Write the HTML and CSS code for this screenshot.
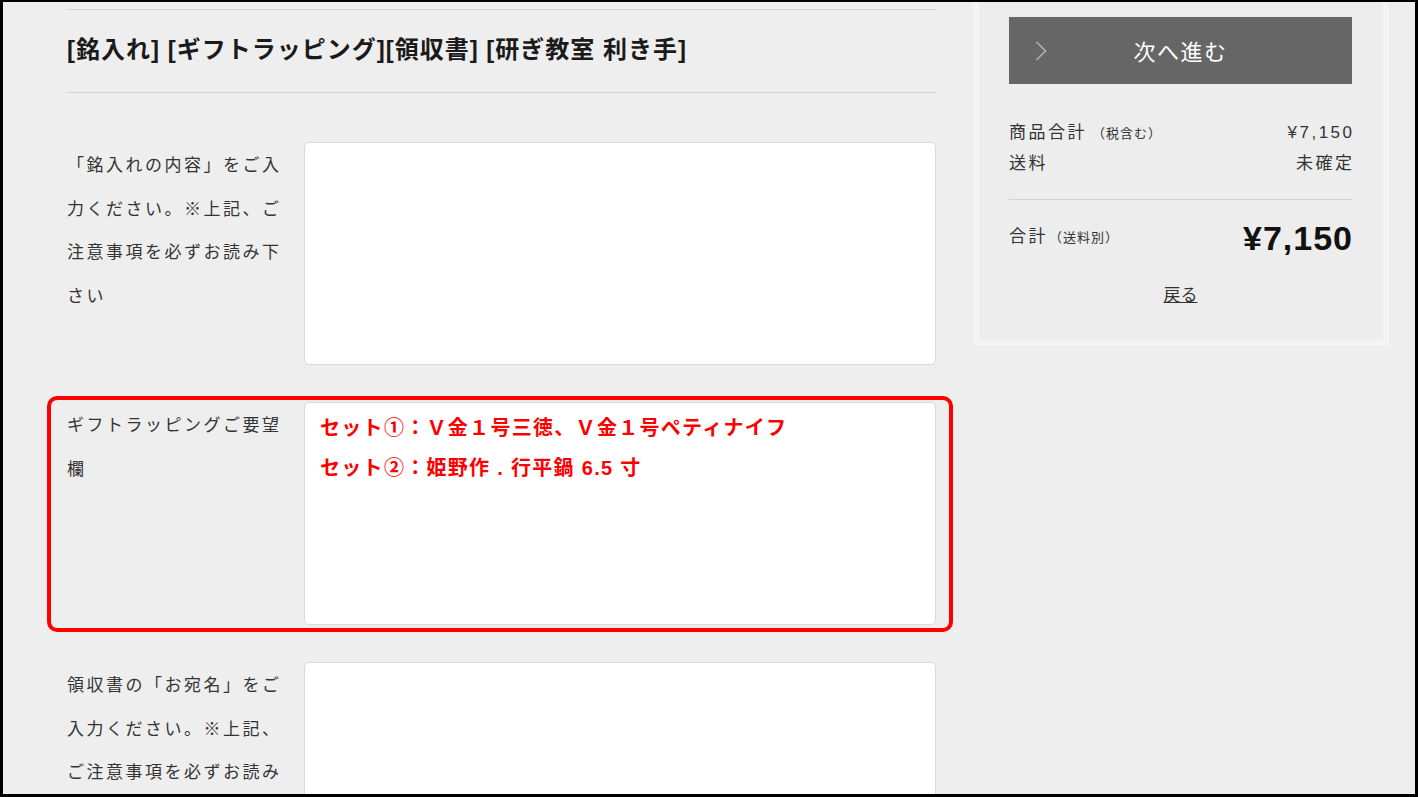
FILE: index.html
```html
<!DOCTYPE html>
<html lang="ja">
<head>
  <meta charset="utf-8">
  <link rel="stylesheet" href="styles.css">
</head>
<body>
  <div class="screen">
    <div class="page">
      <main class="form-col">
        <h2 class="section-title">[銘入れ] [ギフトラッピング][領収書] [研ぎ教室 利き手]</h2>

        <div class="field">
          <label class="field-label">「銘入れの内容」をご入力ください。※上記、ご注意事項を必ずお読み下さい</label>
          <textarea class="field-input"></textarea>
        </div>

        <div class="field is-marked">
          <label class="field-label">ギフトラッピングご要望欄</label>
          <textarea class="field-input is-red">セット①：Ｖ金１号三徳、Ｖ金１号ペティナイフ
セット②：姫野作 . 行平鍋 6.5 寸</textarea>
        </div>

        <div class="field">
          <label class="field-label">領収書の「お宛名」をご入力ください。※上記、ご注意事項を必ずお読み下さい</label>
          <textarea class="field-input"></textarea>
        </div>
      </main>

      <aside class="cart-summary">
        <a class="btn-next" href="#">
          <svg class="btn-arrow" width="12" height="20" viewBox="0 0 12 20">
            <polyline points="1.5,1 10.5,10 1.5,19" fill="none" stroke="#b4b4b4" stroke-width="1.5"/>
          </svg>
          <span>次へ進む</span>
        </a>

        <div class="summary-rows">
          <div class="summary-row">
            <span>商品合計<small>（税含む）</small></span>
            <span>¥7,150</span>
          </div>
          <div class="summary-row">
            <span>送料</span>
            <span>未確定</span>
          </div>
        </div>

        <div class="summary-total">
          <span>合計<small>（送料別）</small></span>
          <strong>¥7,150</strong>
        </div>

        <a class="back-link" href="#">戻る</a>
      </aside>
    </div>
  </div>
</body>
</html>
```

FILE: styles.css
```css
:root {
  --color-bg: #eeeeee;
  --color-panel: #ededed;
  --color-panel-edge: #f4f4f4;
  --color-line: #d2d2d2;
  --color-text: #333333;
  --color-red: #ff0000;
  --font-main: "Liberation Sans", "Noto Sans CJK JP", sans-serif;
}

body, html {
  margin: 0;
  padding: 0;
  background: #000;
}

.screen {
  width: 1418px;
  height: 797px;
  box-sizing: border-box;
  border-style: solid;
  border-color: #000;
  border-width: 2px 3px 3px 3px;
  background: var(--color-bg);
  overflow: hidden;
  font-family: var(--font-main);
  color: var(--color-text);
}

.page {
  display: flex;
  align-items: flex-start;
  gap: 37px;
  padding-left: 64px;
}

/* left column */
.form-col {
  width: 869px;
  padding-top: 7px;
}

.section-title {
  margin: 0;
  padding: 24px 0 26px;
  border-top: 1px solid var(--color-line);
  border-bottom: 1px solid var(--color-line);
  font-size: 24px;
  line-height: 32px;
  letter-spacing: 1px;
  font-weight: bold;
  color: #1a1a1a;
}

.field {
  position: relative;
  display: grid;
  grid-template-columns: 218px 1fr;
  column-gap: 19px;
  margin-top: 37px;
}

.section-title + .field {
  margin-top: 49px;
}

.field-label {
  padding-top: 2px;
  font-size: 17px;
  line-height: 43.5px;
  letter-spacing: 2.5px;
}

.field-input {
  display: block;
  width: 100%;
  height: 223px;
  box-sizing: border-box;
  margin: 0;
  padding: 5px 15px;
  border: 1px solid #d9d9d9;
  border-radius: 5px;
  background: #fff;
  resize: none;
  font-family: var(--font-main);
  font-size: 20px;
  line-height: 40px;
  color: var(--color-text);
}

.field-input.is-red {
  color: var(--color-red);
  font-weight: bold;
  letter-spacing: 1.3px;
}

.field.is-marked::after {
  content: "";
  position: absolute;
  top: -6px;
  left: -20px;
  right: -17px;
  bottom: -7px;
  border: 4px solid var(--color-red);
  border-radius: 10px;
  pointer-events: none;
}

/* right column */
.cart-summary {
  width: 416px;
  box-sizing: border-box;
  padding: 15px 31px 32px 30px;
  background: var(--color-panel);
  border: 6px solid var(--color-panel-edge);
  border-top: 0;
}

.btn-next {
  position: relative;
  display: flex;
  align-items: center;
  justify-content: center;
  height: 67px;
  padding-bottom: 2px;
  box-sizing: border-box;
  background: #666666;
  color: #fff;
  text-decoration: none;
  font-size: 22px;
  letter-spacing: 1.5px;
}

.btn-arrow {
  position: absolute;
  left: 26px;
  top: 24px;
}

.summary-rows {
  margin-top: 34px;
  padding-bottom: 20px;
  border-bottom: 1px solid var(--color-line);
}

.summary-row {
  display: flex;
  justify-content: space-between;
  align-items: baseline;
  font-size: 17px;
  line-height: 30px;
  letter-spacing: 2.5px;
}

.summary-row > span:last-child {
  margin-right: -2.5px;
}

.summary-row small,
.summary-total small {
  font-size: 13px;
  letter-spacing: 1px;
  margin-left: 5px;
}

.summary-total small {
  margin-left: 1px;
}

.summary-total {
  display: flex;
  justify-content: space-between;
  align-items: center;
  margin-top: 17px;
  font-size: 17px;
  line-height: 40px;
  letter-spacing: 2.5px;
}

.summary-total strong {
  font-size: 34px;
  letter-spacing: 1px;
  margin-right: -1px;
  color: #111;
}

.back-link {
  display: block;
  width: max-content;
  margin: 26px auto 0;
  font-size: 17px;
  line-height: 24px;
  color: var(--color-text);
}
```
